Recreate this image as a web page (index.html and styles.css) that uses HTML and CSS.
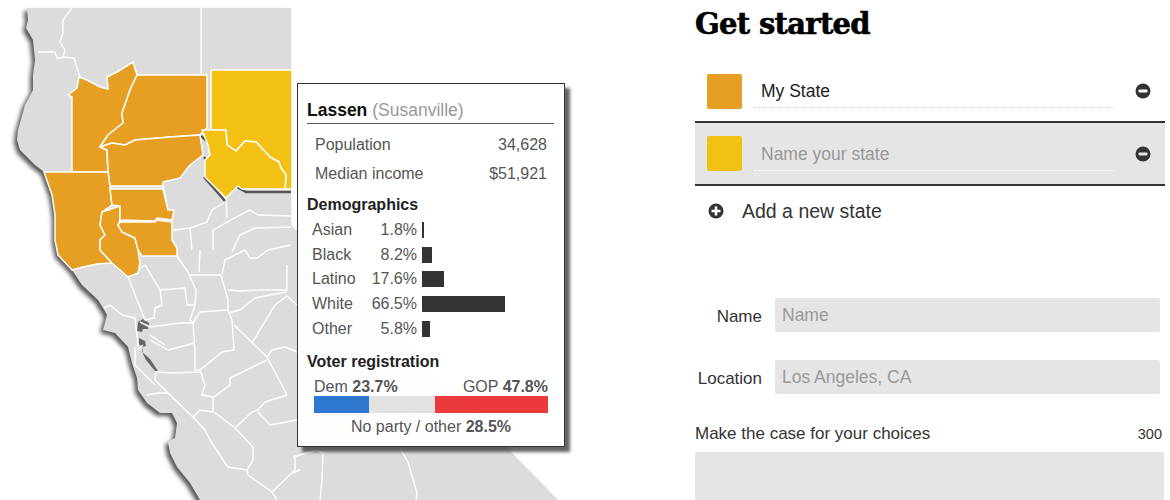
FILE: index.html
```html
<!DOCTYPE html>
<html lang="en">
<head>
  <meta charset="UTF-8">
  <title>Get started</title>
  <link rel="stylesheet" href="styles.css">
</head>
<body>
  <div class="page">
    <div class="map-col">
      <svg class="map" width="695" height="500" viewBox="0 0 695 500">
        <path class="land" d="M27 8L28 20 26 28 33 40 35 60 33 75 33 90 25 105 18 130 17 140 20 150 35 165 44 172 52 195 55 215 55 240 58 255 72 270 82 285 98 300 103 308 107 315 103 330 115 333 128 347 132 363 137 378 138 390 147 403 160 413 172 413 177 423 175 438 168 442 170 453 177 467 190 483 200 500 558 500 291 225 291 8Z"/>
        <path class="bay" d="M138 322l5-3 6 4-1 6-5 0-1 3-5-1zM139 338l6 3 1 5-4 1 0 5 8 7 8 12-3 0-9-11-3-6-1-7-3-3z"/>
        <path class="county" d="M72 8L63 20 63 33 60 42 65 50 63 57 74 58 80 77M38 52L55 52 57 58 63 58M201 8L201 75M137 75L207 75"/>
        <path class="county" d="M163 186L168 210M226 198L227 218M173 230L190 228 207 222 212 210 224 203M190 228L192 250M213 250L213 230 240 215 250 210 258 215 291 216M232 252L240 235 255 228 291 227"/>
        <path class="county" d="M177 256L188 272M190 275L221 275M200 250L199 272M221 275L228 300 228 310 200 312 193 323M225 260L222 274M225 260L245 250 250 258 257 258 268 250 291 245"/>
        <path class="county" d="M128 277L145 265 160 290 162 305 155 308 154 318 145 320 128 277M160 290L185 288 187 305 195 305M188 272L196 290 195 305 190 320 193 323 180 323 150 327 140 322"/>
        <path class="county" d="M193 323L195 350 195 370 200 370M228 310L232 320 234 350 222 352 200 370M228 290L240 291 262 290 287 290 287 265M228 313L240 310 255 298 270 295 287 292M234 325L267 357 287 395"/>
        <path class="county" d="M252 343L275 305 287 296 297 305M267 357L272 350 285 347 297 352M200 370L205 385 202 395 213 397 213 412 200 410 193 417 168 393 155 380 156 372 172 373 200 372M230 378L267 360M230 378L230 385 214 397"/>
        <path class="county" d="M214 412L235 428 252 412 258 410 265 402 287 395M258 412L270 425 297 420M235 428L253 447 253 460 247 470 248 475 272 492 277 500M193 417L205 430 210 440 225 463 228 467 247 470M272 492L295 470 295 455"/>
        <path class="county" d="M147 395L158 393 168 393M137 350L143 345M135 347L135 365 155 385M104 308L110 305 122 315 135 318 137 335 138 347M150 340L168 350 195 343M150 335L165 345M323 453L322 480 320 500M293 457L317 450 323 453M400 448L408 462 417 493 416 500M292 473L300 470"/>
        <path class="county" d="M297 240L340 270 400 300 470 330M297 300L360 350 420 420"/>
        <path class="edge" d="M204 177L225 201M237 187L246 192 291 192M201 136L208 142M204 157L208 162"/>
        <polygon class="orange" points="72,97 68,95 77,88 79,77 87,80 100,87 108,89 107,77 117,72 133,62 137,75 130,90 122,113 123,123 108,135 100,147 107,150 108,172 72,172"/>
        <polygon class="orange" points="137,75 207,75 207,128 200,135 170,137 135,140 125,145 112,143 100,147 108,135 123,123 122,113 130,90"/>
        <polygon class="orange" points="112,143 125,145 135,140 170,137 200,135 203,155 190,165 180,178 163,182 163,186 110,186 108,172 107,150 100,147"/>
        <polygon class="orange" points="44,172 108,172 110,186 112,205 102,212 100,225 105,235 100,240 100,250 112,263 97,264 83,267 72,270 58,255 55,240 55,215 52,195"/>
        <polygon class="orange" points="102,212 120,206 120,220 118,225 122,232 135,238 138,250 140,263 138,273 128,277 112,263 100,250 100,240 105,235 100,225"/>
        <polygon class="orange" points="110,189 163,189 168,210 174,210 172,220 157,218 155,221 120,220 120,206 112,205"/>
        <polygon class="orange" points="120,222 155,222 157,220 172,222 172,240 177,248 177,256 142,256 138,250 135,238 122,232 118,225"/>
        <polygon class="yellow" points="211,70 292,70 292,189 285,189 286,175 281,168 279,162 270,157 256,142 245,141 236,151 227,145 226,130 211,130"/>
        <polygon class="yellow" points="202,130 226,130 227,145 236,151 245,141 256,142 270,157 279,162 281,168 286,175 285,189 242,189 238,186 226,198 205,177 205,160 210,155 208,145"/>
      </svg>
      <div class="tooltip">
        <div class="tip-title"><b>Lassen</b> <span>(Susanville)</span></div>
        <div class="tip-stat"><span>Population</span><span>34,628</span></div>
        <div class="tip-stat"><span>Median income</span><span>$51,921</span></div>
        <h4>Demographics</h4>
        <div class="demo"><span class="demo-name">Asian</span><span class="demo-pct">1.8%</span><i style="width:2px"></i></div>
        <div class="demo"><span class="demo-name">Black</span><span class="demo-pct">8.2%</span><i style="width:10px"></i></div>
        <div class="demo"><span class="demo-name">Latino</span><span class="demo-pct">17.6%</span><i style="width:22px"></i></div>
        <div class="demo"><span class="demo-name">White</span><span class="demo-pct">66.5%</span><i style="width:83px"></i></div>
        <div class="demo"><span class="demo-name">Other</span><span class="demo-pct">5.8%</span><i style="width:8px"></i></div>
        <h4 class="voter-head">Voter registration</h4>
        <div class="voter-labels"><span>Dem <b>23.7%</b></span><span>GOP <b>47.8%</b></span></div>
        <div class="voter-bar"><i class="dem" style="width:55px"></i><i class="other" style="width:66px"></i><i class="gop" style="width:113px"></i></div>
        <div class="voter-other">No party / other <b>28.5%</b></div>
      </div>
    </div>

    <div class="panel">
      <h1>Get started</h1>
      <div class="state">
        <div class="swatch swatch-orange"></div>
        <input class="state-name" type="text" value="My State">
        <svg class="icon" width="16" height="16" viewBox="0 0 16 16"><circle cx="8" cy="8" r="7.5"/><rect x="3.5" y="6.5" width="9" height="3" rx="1"/></svg>
      </div>
      <div class="state state-active">
        <div class="swatch swatch-yellow"></div>
        <input class="state-name" type="text" placeholder="Name your state">
        <svg class="icon" width="16" height="16" viewBox="0 0 16 16"><circle cx="8" cy="8" r="7.5"/><rect x="3.5" y="6.5" width="9" height="3" rx="1"/></svg>
      </div>
      <div class="add-state">
        <svg class="icon" width="16" height="16" viewBox="0 0 16 16"><circle cx="8" cy="8" r="7.5"/><path d="M6.7 3.5h2.6v3.2h3.2v2.6H9.3v3.2H6.7V9.3H3.5V6.7h3.2z"/></svg>
        <span>Add a new state</span>
      </div>
      <div class="field field-name">
        <label>Name</label>
        <input type="text" placeholder="Name">
      </div>
      <div class="field field-location">
        <label>Location</label>
        <input type="text" placeholder="Los Angeles, CA">
      </div>
      <div class="case-head"><span>Make the case for your choices</span><span class="count">300</span></div>
      <div class="case-box"></div>
    </div>
  </div>
</body>
</html>
```

FILE: styles.css
```css
* {
  margin: 0;
  padding: 0;
  box-sizing: border-box;
}

html, body {
  width: 100%;
  height: 500px;
  overflow: hidden;
  background-color: #fff;
  font-family: "Liberation Sans", Arial, sans-serif;
  color: #333;
}

.page {
  display: flex;
  height: 500px;
  overflow: hidden;
}

.map-col {
  position: relative;
  width: 695px;
  flex-shrink: 0;
}

.map {
  display: block;
}

.land {
  fill: #dcdcdc;
  filter: drop-shadow(-3px 3px 2px #555);
}

.bay {
  fill: #666;
}

.county {
  fill: none;
  stroke: #fff;
  stroke-width: 1.4;
  stroke-linejoin: round;
}

.edge {
  fill: none;
  stroke: #555;
  stroke-width: 2.5;
}

.orange, .yellow {
  stroke: #fff;
  stroke-width: 1.5;
  stroke-linejoin: round;
}

.orange {
  fill: #e69f22;
}

.yellow {
  fill: #f3c014;
}

/* county tooltip */
.tooltip {
  position: absolute;
  left: 297px;
  top: 83px;
  width: 268px;
  height: 364px;
  padding: 16px 10px 0 9px;
  background-color: rgba(255, 255, 255, 0.96);
  border: 1px solid #333;
  box-shadow: 5px 5px 3px rgba(50, 50, 50, 0.75);
  font-size: 16px;
  color: #555;
}

.tip-title {
  height: 24px;
  padding-bottom: 4px;
  line-height: 20px;
  border-bottom: 1px solid #555;
  font-size: 17.5px;
  color: #999;
}

.tip-title b {
  color: #111;
}

.tip-stat {
  display: flex;
  justify-content: space-between;
  height: 29px;
  padding: 0 7px 0 8px;
  line-height: 29px;
}

.tip-title + .tip-stat {
  margin-top: 6px;
}

.tooltip h4 {
  height: 25px;
  margin-top: 5px;
  line-height: 24px;
  font-size: 16px;
  color: #222;
}

.demo {
  display: flex;
  align-items: center;
  height: 24.6px;
  padding-left: 5px;
}

.demo-name {
  width: 50px;
}

.demo-pct {
  width: 55px;
  text-align: right;
}

.demo i {
  display: block;
  height: 16px;
  margin-left: 5px;
  background-color: #333;
}

.tooltip .voter-head {
  margin-top: 9px;
}

.voter-labels {
  display: flex;
  justify-content: space-between;
  width: 234px;
  margin: 2px 0 0 7px;
  line-height: 19px;
}

.voter-bar {
  display: flex;
  width: 234px;
  height: 17px;
  margin-left: 7px;
}

.voter-bar i {
  display: block;
  height: 100%;
}

.dem {
  background-color: #2f78cf;
}

.other {
  background-color: #e2e2e0;
}

.gop {
  background-color: #ec3a3c;
}

.voter-other {
  width: 234px;
  margin: 4px 0 0 7px;
  text-align: center;
  line-height: 20px;
}

/* right hand form */
.panel {
  width: 470px;
}

h1 {
  height: 61px;
  padding-top: 5px;
  line-height: 38px;
  font-family: "DejaVu Serif", serif;
  font-weight: 700;
  font-size: 29px;
  letter-spacing: -0.7px;
  color: #000;
  -webkit-text-stroke: 0.6px #000;
}

.state {
  display: flex;
  align-items: center;
  height: 60px;
  padding: 0 13px 0 12px;
}

.state-active {
  height: 65px;
  background-color: #e5e5e5;
  border-top: 2px solid #333;
  border-bottom: 2px solid #333;
}

.swatch {
  width: 35px;
  height: 35px;
  border-radius: 2px;
}

.swatch-orange {
  background-color: #e69f22;
}

.swatch-yellow {
  background-color: #f3c014;
}

input {
  font-family: "Liberation Sans", Arial, sans-serif;
  border: none;
  outline: none;
  background: none;
}

input::placeholder {
  color: #999;
  opacity: 1;
}

.state-name {
  width: 360px;
  height: 34px;
  margin: 0 21px 0 12px;
  padding: 2px 7px 0 7px;
  font-size: 17.5px;
  color: #222;
  border-bottom: 1px dotted #ccc;
}

.state-active .state-name {
  border-bottom-color: #fff;
}

.icon {
  display: block;
  flex-shrink: 0;
}

.icon circle {
  fill: #333;
}

.icon rect, .icon path {
  fill: #fff;
}

.state-active .icon rect {
  fill: #e5e5e5;
}

.add-state {
  display: flex;
  align-items: center;
  gap: 18px;
  height: 50px;
  padding-left: 13px;
  font-size: 19.5px;
}

.field {
  display: flex;
  align-items: center;
  gap: 13px;
}

.field-name {
  margin-top: 62px;
}

.field-location {
  margin-top: 28px;
}

.field label {
  width: 67px;
  padding-top: 3px;
  text-align: right;
  font-size: 17px;
  white-space: nowrap;
}

.field input {
  width: 385px;
  height: 34px;
  padding: 1px 7px 0 7px;
  background-color: #e5e5e5;
  border-radius: 2px;
  font-size: 17.5px;
}

.case-head {
  display: flex;
  justify-content: space-between;
  align-items: center;
  height: 20px;
  margin-top: 30px;
  font-size: 17px;
}

.count {
  padding-right: 3px;
  font-size: 14.5px;
}

.case-box {
  width: 469px;
  height: 48px;
  margin-top: 8px;
  background-color: #e5e5e5;
  border-radius: 2px;
}
```
